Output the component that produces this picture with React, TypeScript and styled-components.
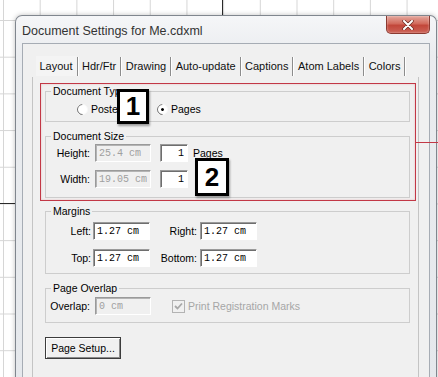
import React from "react";
import styled, { createGlobalStyle } from "styled-components";

const GlobalStyle = createGlobalStyle`
  html, body {
    margin: 0;
    padding: 0;
    background: #fff;
  }
  body {
    font-family: "Liberation Sans", Arial, sans-serif;
  }
`;

// Fundo do ChemDraw (grade)
const Canvas = styled.div`
  position: relative;
  width: 438px;
  height: 377px;
  overflow: hidden;
  box-sizing: border-box;
  padding: 15px 0 0 15px;
  background-color: #fff;
  background-image: linear-gradient(to right, #d6d6d6 1px, transparent 1px),
    linear-gradient(to bottom, #d6d6d6 1px, transparent 1px);
  background-size: 36.7px 36.7px;
  background-position: 3px 20px;
`;

const Bond = styled.div<{ $x: number; $y: number; $w: number; $h: number }>`
  position: absolute;
  left: ${(p) => p.$x}px;
  top: ${(p) => p.$y}px;
  width: ${(p) => p.$w}px;
  height: ${(p) => p.$h}px;
  background: #2a2a2a;
`;

const Window = styled.div`
  position: relative;
  z-index: 1;
  width: 422px;
  height: 372px;
  box-sizing: border-box;
  border: 1px solid #80868e;
  border-bottom: none;
  border-radius: 7px 7px 0 0;
  background: linear-gradient(#f5f6f8, #eaecef 40px, #e5e8ec);
  box-shadow: 0 0 5px rgba(0, 0, 0, 0.25);
  display: flex;
  flex-direction: column;
`;

const TitleBar = styled.div`
  height: 27px;
  flex: none;
  display: flex;
  align-items: flex-start;
  justify-content: space-between;
  padding-left: 6px;
`;

const Title = styled.span`
  margin-top: 8px;
  font-size: 12.5px;
  line-height: 15px;
  color: #333;
`;

const CloseButton = styled.div`
  width: 44px;
  height: 18px;
  margin-right: 6px;
  box-sizing: border-box;
  border: 1px solid #8a3a31;
  border-top: none;
  border-radius: 0 0 5px 5px;
  background: linear-gradient(#e4a79d, #d26a5c 45%, #c2473a 55%, #cc6257);
  display: flex;
  align-items: center;
  justify-content: center;
  box-shadow: inset 0 0 2px rgba(255, 255, 255, 0.6);
`;

const Client = styled.div`
  flex: 1;
  margin: 0 6px;
  border: 1px solid #a6acb4;
  border-bottom: none;
  background: #f0f0f0;
  display: flex;
  flex-direction: column;
`;

const TabStrip = styled.div`
  margin: 11px 10px 0 9px;
  height: 22px;
  padding-left: 4px;
  display: flex;
  align-items: center;
`;

const Tab = styled.span<{ $active?: boolean }>`
  padding: 0 4px 0 3.5px;
  font-size: 11px;
  line-height: 20px;
  color: #111;
  background: ${(p) => (p.$active ? "#f4f4f4" : "transparent")};
`;

const TabSep = styled.span`
  width: 1px;
  height: 19px;
  background: #8c8c8c;
  border-right: 1px solid #fff;
`;

const Panel = styled.div`
  flex: 1;
  margin: 0 10px 0 9px;
  border: 1px solid #c4c4c4;
  border-top: none;
  padding: 6px 8px 0 12px;
  display: flex;
  flex-direction: column;
  align-items: stretch;
  font-size: 10.5px;
  color: #000;
`;

// Destaque vermelho da anotação
const Highlight = styled.div`
  position: relative;
  margin: 0 -6px 0 -5px;
  border: 1px solid #c23846;
  padding: 1px 5px 2px 4px;
  box-shadow: inset 0 0 2px rgba(220, 110, 120, 0.45);
`;

const Pointer = styled.div`
  position: absolute;
  left: 100%;
  top: 58px;
  width: 30px;
  height: 1px;
  background: #c23846;
`;

const Badge = styled.div<{ $x: number; $y: number; $w: number; $h: number }>`
  position: absolute;
  left: ${(p) => p.$x}px;
  top: ${(p) => p.$y}px;
  width: ${(p) => p.$w}px;
  height: ${(p) => p.$h}px;
  box-sizing: border-box;
  border: 3px solid #000;
  background: #fff;
  box-shadow: 1px 2px 2px rgba(0, 0, 0, 0.35);
  display: flex;
  align-items: center;
  justify-content: center;
  font-weight: bold;
  font-size: 26px;
  color: #000;
`;

const Group = styled.fieldset<{ $mt?: number; $pb?: number }>`
  margin: ${(p) => p.$mt ?? 0}px 0 0 0;
  padding: 0 0 ${(p) => p.$pb ?? 0}px 0;
  border: 1px solid #cdcdcd;
  min-width: 0;
`;

const Legend = styled.legend`
  margin-left: 5px;
  padding: 0 2px;
  font-size: 10.5px;
  line-height: 13px;
`;

const Row = styled.div<{ $mt: number }>`
  display: flex;
  align-items: center;
  height: 18px;
  margin-top: ${(p) => p.$mt}px;
`;

const RadioRow = styled(Row)`
  height: 16px;
  padding-left: 31px;
`;

const RadioItem = styled.label<{ $w?: number }>`
  display: flex;
  align-items: center;
  width: ${(p) => (p.$w ? `${p.$w}px` : "auto")};
  gap: 3px;
`;

const RadioCircle = styled.span<{ $checked?: boolean }>`
  position: relative;
  width: 11px;
  height: 11px;
  box-sizing: border-box;
  border-radius: 50%;
  border: 1px solid;
  border-color: #7a7a7a #f8f8f8 #f8f8f8 #7a7a7a;
  transform: rotate(-45deg);
  background: #fff;

  &::after {
    content: "";
    display: ${(p) => (p.$checked ? "block" : "none")};
    position: absolute;
    left: 3px;
    top: 3px;
    width: 3px;
    height: 3px;
    border-radius: 50%;
    background: #000;
  }
`;

const FieldLabel = styled.span<{ $w: number; $mr: number }>`
  width: ${(p) => p.$w}px;
  margin-right: ${(p) => p.$mr}px;
  text-align: right;
  white-space: nowrap;
`;

const TextBox = styled.input<{ $w: number; $ml?: number; $right?: boolean }>`
  width: ${(p) => p.$w}px;
  height: 18px;
  margin: 0 0 0 ${(p) => p.$ml ?? 0}px;
  box-sizing: border-box;
  padding: 1px 3px 0 3px;
  border: 1px solid;
  border-color: #9a9a9a #fff #fff #9a9a9a;
  box-shadow: inset 1px 1px 0 #6e6e6e;
  background: #fff;
  font-family: "Liberation Mono", "Courier New", monospace;
  font-size: 10px;
  color: #000;
  text-align: ${(p) => (p.$right ? "right" : "left")};
  outline: none;

  &:disabled {
    background: #f0f0f0;
    color: #a0a0a0;
    box-shadow: inset 1px 1px 0 #b4b4b4;
  }
`;

const Suffix = styled.span`
  margin-left: 5px;
`;

const CheckItem = styled.label`
  display: flex;
  align-items: center;
  margin-left: 21px;
  gap: 3px;
  color: #a6a6a6;
`;

const CheckBox = styled.span`
  width: 13px;
  height: 13px;
  box-sizing: border-box;
  border: 1px solid #b3b3b3;
  background: #f0f0f0;
  display: flex;
  align-items: center;
  justify-content: center;
`;

const PushButton = styled.button`
  align-self: flex-start;
  margin-top: 14px;
  width: 76px;
  height: 22px;
  padding: 0 0 1px 0;
  border: 1px solid #3c3c3c;
  box-shadow: inset 1px 1px 0 #fff, inset -1px -1px 0 #8a8a8a;
  background: #f0f0f0;
  font-family: "Liberation Sans", Arial, sans-serif;
  font-size: 10.5px;
  color: #000;
`;

const tabs = ["Layout", "Hdr/Ftr", "Drawing", "Auto-update", "Captions", "Atom Labels", "Colors"];

export default function App() {
  return (
    <>
      <GlobalStyle />
      <Canvas>
        <Bond $x={222} $y={0} $w={1} $h={16} />
        <Bond $x={0} $y={203} $w={16} $h={1} />
        <Window>
          <TitleBar>
            <Title>Document Settings for Me.cdxml</Title>
            <CloseButton>
              <svg width="12" height="10" viewBox="0 0 12 10">
                <path d="M2 1 L10 9 M10 1 L2 9" stroke="#6b2a22" strokeWidth="3.4" strokeLinecap="round" />
                <path d="M2 1 L10 9 M10 1 L2 9" stroke="#fff" strokeWidth="2" strokeLinecap="round" />
              </svg>
            </CloseButton>
          </TitleBar>
          <Client>
            <TabStrip>
              {tabs.map((t, i) => (
                <React.Fragment key={t}>
                  <Tab $active={i === 0}>{t}</Tab>
                  <TabSep />
                </React.Fragment>
              ))}
            </TabStrip>
            <Panel>
              <Highlight>
                <Group $pb={4}>
                  <Legend>Document Type</Legend>
                  <RadioRow $mt={3}>
                    <RadioItem $w={80}>
                      <RadioCircle />
                      Poster
                    </RadioItem>
                    <RadioItem>
                      <RadioCircle $checked />
                      Pages
                    </RadioItem>
                  </RadioRow>
                </Group>
                <Group $mt={8} $pb={9}>
                  <Legend>Document Size</Legend>
                  <Row $mt={1}>
                    <FieldLabel $w={44} $mr={5}>Height:</FieldLabel>
                    <TextBox $w={56} defaultValue="25.4 cm" disabled />
                    <TextBox $w={28} $ml={9} $right defaultValue="1" readOnly />
                    <Suffix>Pages</Suffix>
                  </Row>
                  <Row $mt={8}>
                    <FieldLabel $w={44} $mr={5}>Width:</FieldLabel>
                    <TextBox $w={56} defaultValue="19.05 cm" disabled />
                    <TextBox $w={28} $ml={9} $right defaultValue="1" readOnly />
                  </Row>
                </Group>
                <Badge $x={76} $y={5} $w={32} $h={35}>1</Badge>
                <Badge $x={154} $y={74} $w={34} $h={38}>2</Badge>
                <Pointer />
              </Highlight>
              <Group $mt={4} $pb={6}>
                <Legend>Margins</Legend>
                <Row $mt={4}>
                  <FieldLabel $w={45} $mr={2}>Left:</FieldLabel>
                  <TextBox $w={57} defaultValue="1.27 cm" readOnly />
                  <FieldLabel $w={47} $mr={3}>Right:</FieldLabel>
                  <TextBox $w={57} defaultValue="1.27 cm" readOnly />
                </Row>
                <Row $mt={9}>
                  <FieldLabel $w={45} $mr={2}>Top:</FieldLabel>
                  <TextBox $w={57} defaultValue="1.27 cm" readOnly />
                  <FieldLabel $w={47} $mr={3}>Bottom:</FieldLabel>
                  <TextBox $w={57} defaultValue="1.27 cm" readOnly />
                </Row>
              </Group>
              <Group $mt={8} $pb={7}>
                <Legend>Page Overlap</Legend>
                <Row $mt={2}>
                  <FieldLabel $w={44} $mr={5}>Overlap:</FieldLabel>
                  <TextBox $w={56} defaultValue="0 cm" disabled />
                  <CheckItem>
                    <CheckBox>
                      <svg width="9" height="9" viewBox="0 0 9 9">
                        <path d="M1 4 L3.5 6.5 L8 1.5" stroke="#a8a8a8" strokeWidth="1.8" fill="none" />
                      </svg>
                    </CheckBox>
                    Print Registration Marks
                  </CheckItem>
                </Row>
              </Group>
              <PushButton>Page Setup...</PushButton>
            </Panel>
          </Client>
        </Window>
      </Canvas>
    </>
  );
}
